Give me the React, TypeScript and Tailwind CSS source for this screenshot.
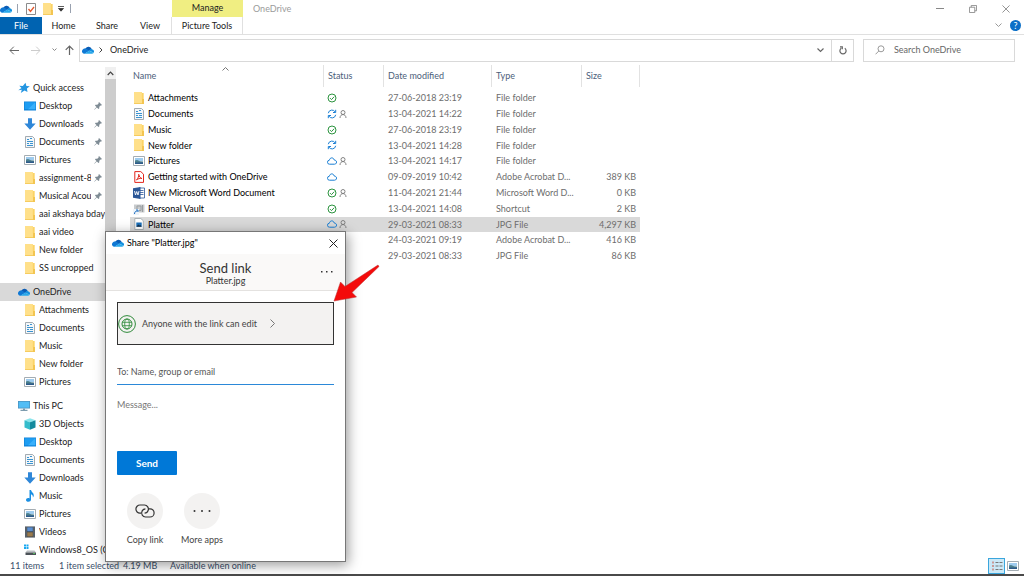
import type { ReactNode } from 'react';
import clsx from 'clsx';

function CloudLogo({ className = 'w-3 h-2' }: { className?: string }) {
  return (
    <svg className={clsx('shrink-0', className)} viewBox="0 0 24 16" preserveAspectRatio="none">
      <path d="M7 5a7 7 0 0 1 12.5 1.2L14 10 6 5.4z" fill="#0a5cb5" />
      <path d="M7.5 5.2 15 9.6 5 15.6H4A4.9 4.9 0 0 1 .8 8C1.800 5.500 5 4.200 7.500 5.200z" fill="#0f78d4" />
      <path d="M14.500 9.300c2-2.800 4-3.400 5.400-3a4.900 4.900 0 0 1 3.600 7.200z" fill="#1490df" />
      <path d="m14.500 9.300 9 4.200a4.600 4.600 0 0 1-3.800 2.100H4.300z" fill="#28a8ea" />
    </svg>
  );
}

function FolderIcon() {
  return (
    <svg className="w-3 h-3 shrink-0" viewBox="0 0 12 12">
      <path d="M1 0h8v1h1.500v11H1z" fill="#ffe08a" />
      <path d="M8.800 1h1.700v6.500H8.800z" fill="#fbd365" />
      <path d="M9 7h2v5H1v-.8h8z" fill="#f3c551" />
    </svg>
  );
}

function DocumentIcon() {
  return (
    <svg className="w-3 h-3 shrink-0" viewBox="0 0 12 12">
      <path d="M1.500.5h7l2 2v9h-9z" fill="#f4f7f9" stroke="#8d979e" strokeWidth=".8" />
      <path d="M3 3.500h2M6 2.500h2M3 5.500h6M3 7.500h2M6 7.500h3M3 9.500h6" stroke="#3a93d0" strokeWidth="1" />
    </svg>
  );
}

function PictureIcon() {
  return (
    <svg className="w-3 h-3 shrink-0" viewBox="0 0 12 12">
      <path d="M.5 1.500h11v9H.5z" fill="#fff" stroke="#a4adb3" strokeWidth="1" />
      <path d="M2 3h8v3H2z" fill="#9ecbee" />
      <path d="M2 5.500 4 5l3 1.200 3 .3V9H2z" fill="#4c7f8c" />
      <path d="M2 7.500h8V9H2z" fill="#2d5a8a" />
    </svg>
  );
}

function DesktopIcon() {
  return (
    <svg className="w-3 h-3 shrink-0" viewBox="0 0 12 12">
      <path d="M0 1.500h12v9H0z" fill="#1183d8" />
      <path d="M.7 2.200h10.600v7H.7z" fill="#1e9df2" />
      <path d="M11.300 2.200v7H4z" fill="#39b0fb" />
    </svg>
  );
}

function DownloadIcon() {
  return (
    <svg className="w-3 h-3 shrink-0" viewBox="0 0 12 12">
      <path d="M4 .3h4v5.200h3.700L6 11.800.3 5.500H4z" fill="#2f87d8" />
    </svg>
  );
}

function StarIcon() {
  return (
    <svg className="w-3 h-3 shrink-0" viewBox="0 0 12 12">
      <path d="m7.500.8.900 3.200 3.400.3-2.900 2.300.6 3.400-3-1.500L2.800 11l1-3.300-3.500.5L3.500 6 1.300 3.700l3.500.3z" fill="#2596e1" />
    </svg>
  );
}

function ComputerIcon() {
  return (
    <svg className="w-3 h-3 shrink-0" viewBox="0 0 12 12">
      <path d="M0 1h12v7.500H0z" fill="#4a90bd" />
      <path d="M.7 1.700h10.600v6H.7z" fill="#52bdf5" />
      <path d="M5 8.500h2v1.300h2.500v1.200h-7V9.800H5z" fill="#7d9cae" />
    </svg>
  );
}

function CubeIcon() {
  return (
    <svg className="w-3 h-3 shrink-0" viewBox="0 0 12 12">
      <path d="m6 .3 5.500 2L6 4.300l-5.500-2z" fill="#8be5ec" />
      <path d="M.5 2.300 6 4.300v7.500L.5 9.500z" fill="#35bccb" />
      <path d="M11.500 2.300 6 4.300v7.500l5.500-2.300z" fill="#148a9d" />
    </svg>
  );
}

function MusicIcon() {
  return (
    <svg className="w-3 h-3 shrink-0" viewBox="0 0 12 12">
      <path d="M5.500 0H7c.2 2 2.800 2.700 2.800 5.200 0 .9-.4 1.600-.9 2.200.2-1.800-.7-2.700-1.900-3.200v5.300c0 1.300-1.200 2.300-2.600 2.300S2 11 2 10s1-1.900 2.200-1.900c.5 0 .9.100 1.300.3z" fill="#1a8fe3" />
    </svg>
  );
}

function VideoIcon() {
  return (
    <svg className="w-3 h-3 shrink-0" viewBox="0 0 12 12">
      <path d="M1 .5h10v11H1z" fill="#39424c" />
      <path d="M3.200 1.300h5.600v4H3.200z" fill="#5b8fd1" />
      <path d="M3.200 6.300h5.600v4.200H3.200z" fill="#9a7a4c" />
      <path d="M2 1.500v9.500M10 1.500v9.500" stroke="#d6dadd" strokeWidth=".8" strokeDasharray="1 1" />
    </svg>
  );
}

function DriveIcon() {
  return (
    <svg className="w-3 h-3 shrink-0" viewBox="0 0 12 12">
      <path d="M0 .5h2v2H0zM2.500.5h2v2h-2zM0 3h2v2H0zM2.500 3h2v2h-2z" fill="#18a8f1" />
      <path d="M3 6.500h7.500L12 8.500H1.500z" fill="#b9bec2" />
      <path d="M1.500 8.500H12V11H1.500z" fill="#4c5258" />
      <path d="M9 9.300h2v.8H9z" fill="#58d95f" />
    </svg>
  );
}

function PdfIcon() {
  return (
    <svg className="w-3 h-3 shrink-0" viewBox="0 0 12 12">
      <path d="M1.800.6h6l2.700 2.600v8.200H1.800z" fill="#fff" stroke="#e2261d" />
      <path d="M3.500 9C5 7.500 6 5 5.700 3.300 6.200 5.800 7.500 7.200 9 7.500 7 7.200 5 7.600 3.500 9z" fill="none" stroke="#e2261d" />
    </svg>
  );
}

function WordIcon() {
  return (
    <svg className="w-3 h-3 shrink-0" viewBox="0 0 12 12">
      <path d="M6 1h5.500v10H6z" fill="#fff" stroke="#2b5797" strokeWidth=".8" />
      <path d="M7 3.500h3.500M7 5.500h3.500M7 7.500h3.500" stroke="#2b5797" strokeWidth=".8" />
      <path d="m0 1.300 7.500-1.200v11.800L0 10.700z" fill="#2b5797" />
      <path d="m1.500 4 1 4 1.200-3.500L5 8l1-4" fill="none" stroke="#fff" strokeWidth=".9" />
    </svg>
  );
}

function VaultIcon() {
  return (
    <svg className="w-3 h-3 shrink-0" viewBox="0 0 12 12">
      <path d="M1 1.500h10.500v8H1z" fill="#c8cbcd" />
      <path d="M4 3h4v4.500H4zM9.500 2v7" fill="none" stroke="#9a9ea1" />
      <path d="M0 6h6v6H0z" fill="#eef4fa" />
      <path d="M1.500 11c0-2 1-3 3-3M3 7h2v2" fill="none" stroke="#1f6fc0" />
    </svg>
  );
}

function JpgIcon() {
  return (
    <svg className="w-3 h-3 shrink-0" viewBox="0 0 12 12">
      <path d="M1.800.5h6l2.500 2.300v8.700H1.800z" fill="#fff" stroke="#9ba3a8" strokeWidth=".8" />
      <path d="M3.300 4.500h5.400v4.200H3.300z" fill="#1b6fb8" />
      <path d="m3.300 8.700 2-2.200 1.300 1 .8-.6 1.300 1.800z" fill="#17324d" />
    </svg>
  );
}

function PinIcon() {
  return (
    <svg className="w-2 h-2 shrink-0" viewBox="0 0 8 8">
      <path d="M5 0 8 3l-.8.500-.6-.1L5.300 4.700 5.200 6.500l-.7.500-1.600-1.600L.4 7.800l-.2-.2 2.300-2.500L1 3.500l.5-.7 1.800-.1L4.600 1.400 4.500.7z" fill="#7f8c95" />
    </svg>
  );
}

function CheckStatus() {
  return (
    <svg className="w-[10px] h-[10px]" viewBox="0 0 10 10" fill="none" stroke="#2d9440">
      <circle cx="5" cy="5" r="4" />
      <path d="m3 5.100 1.500 1.500L7.200 3.700" />
    </svg>
  );
}

function SyncStatus() {
  return (
    <svg className="w-[10px] h-[10px]" viewBox="0 0 10 10" fill="none" stroke="#1a7fd4">
      <path d="M1.300 4.200A3.700 3.700 0 0 1 8.200 3M8.700.8v2.700H6M8.700 5.800A3.700 3.700 0 0 1 1.800 7M1.300 9.200V6.500H4" />
    </svg>
  );
}

function CloudStatus() {
  return (
    <svg className="w-[10px] h-[10px]" viewBox="0 0 10 10" fill="none" stroke="#1a7fd4">
      <path d="M2.600 8.200a2 2 0 0 1-.2-4C2.800 1.300 6.500 1 7.200 4c3.200.1 3 4.200.3 4.200z" />
    </svg>
  );
}

function PersonIcon() {
  return (
    <svg className="w-2 h-2" viewBox="0 0 8 8" fill="none" stroke="#777" strokeWidth=".9">
      <circle cx="4" cy="2.500" r="2" />
      <path d="M1 8c0-4.600 6-4.600 6 0" />
    </svg>
  );
}

type TreeItem = { name: string; icon: ReactNode; pinned?: boolean };
type TreeGroup = TreeItem & { selected?: boolean; items: TreeItem[] };

const tree: TreeGroup[] = [
  {
    name: 'Quick access',
    icon: <StarIcon />,
    items: [
      { name: 'Desktop', icon: <DesktopIcon />, pinned: true },
      { name: 'Downloads', icon: <DownloadIcon />, pinned: true },
      { name: 'Documents', icon: <DocumentIcon />, pinned: true },
      { name: 'Pictures', icon: <PictureIcon />, pinned: true },
      { name: 'assignment-8', icon: <FolderIcon />, pinned: true },
      { name: 'Musical Acou', icon: <FolderIcon />, pinned: true },
      { name: 'aai akshaya bday', icon: <FolderIcon /> },
      { name: 'aai video', icon: <FolderIcon /> },
      { name: 'New folder', icon: <FolderIcon /> },
      { name: 'SS uncropped', icon: <FolderIcon /> },
    ],
  },
  {
    name: 'OneDrive',
    icon: <CloudLogo />,
    selected: true,
    items: [
      { name: 'Attachments', icon: <FolderIcon /> },
      { name: 'Documents', icon: <DocumentIcon /> },
      { name: 'Music', icon: <FolderIcon /> },
      { name: 'New folder', icon: <FolderIcon /> },
      { name: 'Pictures', icon: <PictureIcon /> },
    ],
  },
  {
    name: 'This PC',
    icon: <ComputerIcon />,
    items: [
      { name: '3D Objects', icon: <CubeIcon /> },
      { name: 'Desktop', icon: <DesktopIcon /> },
      { name: 'Documents', icon: <DocumentIcon /> },
      { name: 'Downloads', icon: <DownloadIcon /> },
      { name: 'Music', icon: <MusicIcon /> },
      { name: 'Pictures', icon: <PictureIcon /> },
      { name: 'Videos', icon: <VideoIcon /> },
      { name: 'Windows8_OS (C', icon: <DriveIcon /> },
    ],
  },
];

type FileRow = {
  name: string;
  icon: ReactNode;
  status: ReactNode;
  shared?: boolean;
  date: string;
  type: string;
  size?: string;
  selected?: boolean;
};

const files: FileRow[] = [
  { name: 'Attachments', icon: <FolderIcon />, status: <CheckStatus />, date: '27-06-2018 23:19', type: 'File folder' },
  { name: 'Documents', icon: <DocumentIcon />, status: <SyncStatus />, shared: true, date: '13-04-2021 14:22', type: 'File folder' },
  { name: 'Music', icon: <FolderIcon />, status: <CheckStatus />, date: '27-06-2018 23:19', type: 'File folder' },
  { name: 'New folder', icon: <FolderIcon />, status: <SyncStatus />, date: '13-04-2021 14:28', type: 'File folder' },
  { name: 'Pictures', icon: <PictureIcon />, status: <CloudStatus />, shared: true, date: '13-04-2021 14:17', type: 'File folder' },
  { name: 'Getting started with OneDrive', icon: <PdfIcon />, status: <CloudStatus />, date: '09-09-2019 10:42', type: 'Adobe Acrobat D...', size: '389 KB' },
  { name: 'New Microsoft Word Document', icon: <WordIcon />, status: <CheckStatus />, shared: true, date: '11-04-2021 21:44', type: 'Microsoft Word D...', size: '0 KB' },
  { name: 'Personal Vault', icon: <VaultIcon />, status: <CheckStatus />, date: '13-04-2021 14:08', type: 'Shortcut', size: '2 KB' },
  { name: 'Platter', icon: <JpgIcon />, status: <CloudStatus />, shared: true, date: '29-03-2021 08:33', type: 'JPG File', size: '4,297 KB', selected: true },
  { name: '', icon: null, status: null, date: '24-03-2021 09:19', type: 'Adobe Acrobat D...', size: '416 KB' },
  { name: '', icon: null, status: null, date: '29-03-2021 08:33', type: 'JPG File', size: '86 KB' },
];

const columns = [
  { name: 'Name', width: 'w-[194px]' },
  { name: 'Status', width: 'w-[60px]' },
  { name: 'Date modified', width: 'w-[108px]' },
  { name: 'Type', width: 'w-[90px]' },
  { name: 'Size', width: 'w-[58px]' },
];

function TitleBar() {
  return (
    <div className="flex h-[17px]">
      <div className="flex w-[172px] items-center">
        <CloudLogo className="w-3 h-2" />
        <span className="ml-[5px] h-[9px] w-px bg-gray-400" />
        <button aria-label="Properties" className="ml-2">
          <svg className="w-[10px] h-3" viewBox="0 0 10 12">
            <path d="M.5.500h9v11h-9z" fill="#fff" stroke="#8b8b8b" />
            <path d="m2.500 6 2 2.500L8 4" fill="none" stroke="#e3562a" strokeWidth="1.300" />
          </svg>
        </button>
        <button aria-label="New folder" className="ml-[6px]">
          <FolderIcon />
        </button>
        <button aria-label="Customize toolbar" className="ml-1">
          <svg className="w-[6px] h-[6px]" viewBox="0 0 6 6">
            <path d="M0 .5h6M.5 2.500h5L3 5.200z" stroke="#333" strokeWidth=".8" fill="#333" />
          </svg>
        </button>
        <span className="ml-[6px] h-[9px] w-px bg-gray-400" />
      </div>
      <div className="w-[71px] bg-[#f0ee82] text-center leading-[16px]">Manage</div>
      <h1 className="ml-[10px] leading-[18px] text-[#9b9b9b]">OneDrive</h1>
      <div className="ml-auto flex items-center gap-[25px] pr-[14px] text-[#888]">
        <button aria-label="Minimize" className="h-px w-2 bg-[#888]" />
        <button aria-label="Restore">
          <svg className="w-2 h-2" viewBox="0 0 9 9" fill="none" stroke="currentColor">
            <path d="M.5 2.500h6v6h-6zM2.500 2.500v-2h6v6h-2" />
          </svg>
        </button>
        <button aria-label="Close">
          <svg className="w-2 h-2" viewBox="0 0 9 9" stroke="currentColor">
            <path d="m.5.500 8 8m0-8-8 8" />
          </svg>
        </button>
      </div>
    </div>
  );
}

function RibbonTabs() {
  return (
    <div className="flex h-[18px] border-b border-[#e0e0e0] leading-[18px]">
      <button className="w-[42px] bg-[#0063b1] text-white">File</button>
      <button className="w-[43px]">Home</button>
      <button className="w-[44px]">Share</button>
      <button className="w-[42px]">View</button>
      <button className="w-[72px] border-x border-[#e0e0e0]">Picture Tools</button>
      <div className="ml-auto flex items-center gap-2 pr-[3px]">
        <button aria-label="Expand ribbon">
          <svg className="w-[7px] h-[5px]" viewBox="0 0 7 5" fill="none" stroke="#999">
            <path d="m.5.500 3 3 3-3" />
          </svg>
        </button>
        <button
          aria-label="Help"
          className="size-[11px] rounded-full bg-[#0b6fc7] text-center leading-[11px] text-white"
        >
          ?
        </button>
      </div>
    </div>
  );
}

function AddressRow() {
  return (
    <div className="flex h-[30px] items-center pl-[9px] pr-[9px]">
      <div className="flex w-[70px] items-center text-[#666]">
        <button aria-label="Back">
          <svg className="w-[10px] h-[9px]" viewBox="0 0 10 9" fill="none" stroke="currentColor">
            <path d="M10 4.500H1M4.800.700 1 4.500l3.800 3.800" />
          </svg>
        </button>
        <button aria-label="Forward" className="ml-3 text-[#ccc]">
          <svg className="w-[10px] h-[9px]" viewBox="0 0 10 9" fill="none" stroke="currentColor">
            <path d="M0 4.500h9M5.200.700 9 4.500 5.200 8.300" />
          </svg>
        </button>
        <button aria-label="Recent locations" className="ml-[11px]">
          <svg className="w-[5px] h-[4px]" viewBox="0 0 5 4" fill="none" stroke="#888">
            <path d="m.5.500 2 2 2-2" />
          </svg>
        </button>
        <button aria-label="Up" className="ml-2">
          <svg className="w-[9px] h-[10px]" viewBox="0 0 9 10" fill="none" stroke="currentColor" strokeWidth="1.200">
            <path d="M4.500 10V1M.7 4.800 4.500 1l3.800 3.800" />
          </svg>
        </button>
      </div>
      <div className="flex h-[23px] flex-1 items-center border border-[#d9d9d9] pl-[2px]">
        <CloudLogo className="w-3 h-2" />
        <svg className="ml-[5px] w-[4px] h-[6px]" viewBox="0 0 4 6" fill="none" stroke="#444">
          <path d="m.5.500 2.500 2.500L.500 5.500" />
        </svg>
        <span className="ml-[7px]">OneDrive</span>
        <button aria-label="Previous locations" className="ml-auto flex h-full w-[21px] items-center justify-center">
          <svg className="w-[7px] h-[5px]" viewBox="0 0 7 5" fill="none" stroke="#666" strokeWidth="1.200">
            <path d="m.5.500 3 3 3-3" />
          </svg>
        </button>
        <button aria-label="Refresh" className="flex h-full w-[22px] items-center justify-center border-l border-[#d9d9d9]">
          <svg className="w-2 h-[9px]" viewBox="0 0 8 9" fill="none" stroke="#666" strokeWidth="1.200">
            <path d="M5.800 2.300A3.100 3.100 0 1 1 2.200 2.300M1 .800h2.300v2.500" />
          </svg>
        </button>
      </div>
      <div className="ml-[9px] flex h-[23px] w-[152px] items-center border border-[#d9d9d9] pl-[11px]">
        <svg className="w-[10px] h-[10px]" viewBox="0 0 10 10" fill="none" stroke="#999">
          <circle cx="6" cy="3.800" r="3" />
          <path d="M3.800 6 .5 9.300" />
        </svg>
        <input
          aria-label="Search OneDrive"
          placeholder="Search OneDrive"
          className="ml-[9px] min-w-0 flex-1 outline-none placeholder:text-[#666]"
        />
      </div>
    </div>
  );
}

function Sidebar() {
  return (
    <div className="flex w-[116px] shrink-0">
      <nav className="min-w-0 flex-1 overflow-hidden pt-[14px]">
        {tree.map((group) => (
          <div key={group.name} className="mb-[6px]">
            <button
              className={clsx(
                'flex h-[18px] w-full items-center gap-[3px] pl-[18px] whitespace-nowrap',
                group.selected && 'bg-[#d9d9d9]',
              )}
            >
              {group.icon}
              {group.name}
            </button>
            {group.items.map((item) => (
              <button key={item.name} className="flex h-[18px] w-full items-center gap-[3px] pl-6 whitespace-nowrap">
                {item.icon}
                <span className="min-w-0 flex-1 overflow-hidden text-left">{item.name}</span>
                {item.pinned && (
                  <span className="pr-[3px]">
                    <PinIcon />
                  </span>
                )}
              </button>
            ))}
          </div>
        ))}
      </nav>
      <div className="flex w-[11px] flex-col pt-[2px]">
        <button aria-label="Scroll up" className="flex h-3 items-center justify-center bg-[#f0f0f0]">
          <svg className="w-[7px] h-[5px]" viewBox="0 0 7 5" fill="none" stroke="#444" strokeWidth="1.200">
            <path d="m.7 4 2.800-2.800L6.300 4" />
          </svg>
        </button>
        <div className="h-[220px] bg-[#cdcdcd]" />
        <div className="flex-1 bg-[#f0f0f0]" />
      </div>
    </div>
  );
}

function FileTable() {
  return (
    <main className="flex-1 pl-[14px]">
      <table className="h-[199px] w-[510px] table-fixed border-collapse text-left whitespace-nowrap">
        <thead>
          <tr>
            {columns.map((col, i) => (
              <th key={col.name} className={clsx('h-[25px] p-0 align-top font-normal', col.width)}>
                <button
                  className={clsx(
                    'relative flex h-[22px] w-full items-center border-r border-[#e2e2e2] text-[#4c607a]',
                    i === 0 ? 'pl-[3px]' : 'pl-1',
                  )}
                >
                  {col.name}
                  {i === 0 && (
                    <svg className="absolute top-[2px] left-[92px] w-[7px] h-[4px]" viewBox="0 0 7 4" fill="none" stroke="#777">
                      <path d="m.5 3.500 3-3 3 3" />
                    </svg>
                  )}
                </button>
              </th>
            ))}
          </tr>
        </thead>
        <tbody className="text-[#6d6d6d]">
          {files.map((file, i) => (
            <tr key={i} className={clsx(file.selected && 'bg-[#d9d9d9]')}>
              <td className="p-0 pl-[3px]">
                <div className="flex items-center gap-[3px] text-black">
                  {file.icon}
                  {file.name}
                </div>
              </td>
              <td className="p-0 pl-[3px]">
                <div className="flex items-center gap-[2px]">
                  {file.status}
                  {file.shared && <PersonIcon />}
                </div>
              </td>
              <td className="p-0 pl-1">{file.date}</td>
              <td className="p-0 pl-1">{file.type}</td>
              <td className="p-0 pr-1 text-right">{file.size}</td>
            </tr>
          ))}
        </tbody>
      </table>
    </main>
  );
}

function ShareDialog() {
  return (
    <div
      role="dialog"
      aria-label="Share Platter.jpg"
      className="absolute top-[231px] left-[105px] w-[241px] border border-[#777] bg-white pb-[15px] shadow-[2px_3px_12px_rgba(0,0,0,0.4)]"
    >
      <div className="flex h-[22px] items-center pl-[6px] pr-[7px]">
        <CloudLogo className="w-3 h-2" />
        <span className="ml-[3px] text-black">Share "Platter.jpg"</span>
        <button aria-label="Close dialog" className="ml-auto">
          <svg className="w-[9px] h-[9px]" viewBox="0 0 9 9" stroke="#222">
            <path d="m.5.500 8 8m0-8-8 8" />
          </svg>
        </button>
      </div>
      <div className="relative h-[37px] border-b border-[#e4e2e0] bg-[#faf9f8] pt-[6px] text-center text-[#333]">
        <h2 className="text-[13px] leading-[16px]">Send link</h2>
        <p className="leading-[10px]">Platter.jpg</p>
        <button aria-label="More options" className="absolute top-4 right-3">
          <svg className="w-3 h-[3px]" viewBox="0 0 12 3" fill="#333">
            <path d="M0 1h1.500v1.500H0zM5 1h1.500v1.500H5zM10 1h1.500v1.500H10z" />
          </svg>
        </button>
      </div>
      <div className="px-[11px] text-[#444]">
        <button className="mt-[11px] flex h-[43px] w-full items-center border border-[#333] bg-[#f3f2f1]">
          <svg className="w-[18px] h-[18px]" viewBox="0 0 18 18" fill="none" stroke="#2f8a3a">
            <circle cx="9" cy="9" r="8.400" />
            <circle cx="9" cy="9" r="5" />
            <path d="M4.300 7.300h9.400M4.300 10.700h9.400" strokeWidth=".8" />
            <ellipse cx="9" cy="9" rx="2.300" ry="5" strokeWidth=".8" />
          </svg>
          <span className="ml-[6px]">Anyone with the link can edit</span>
          <svg className="ml-[13px] w-[5px] h-[9px]" viewBox="0 0 5 9" fill="none" stroke="#777">
            <path d="m.5.500 4 4-4 4" />
          </svg>
        </button>
        <div className="mt-[14px] border-b border-[#2b88d8]">
          <input
            aria-label="To: Name, group or email"
            placeholder="To: Name, group or email"
            className="block h-[25px] w-full outline-none placeholder:text-[#555]"
          />
        </div>
        <textarea
          aria-label="Message"
          placeholder="Message..."
          className="mt-[13px] block h-[53px] w-full resize-none leading-[14px] outline-none placeholder:text-[#777]"
        />
        <button className="block h-6 w-[60px] rounded-[1px] bg-[#0078d7] text-[10px] font-bold text-white">Send</button>
        <div className="mt-[18px] flex">
          <button className="flex w-[56px] flex-col items-center">
            <span className="flex size-9 items-center justify-center rounded-full bg-[#f3f2f1]">
              <svg className="w-5 h-[14px]" viewBox="0 0 20 14" fill="none" stroke="#333" strokeWidth="1.200">
                <path d="M6 9.200H5A4.100 4.100 0 0 1 5 1h4.500a4 4 0 0 1 3.600 5.500c-.5 1.500-2 2.600-3.500 2.700" />
                <path d="M14 4.800h1a4.100 4.100 0 0 1 0 8.200h-4.500a4 4 0 0 1-3.600-5.500c.5-1.500 2-2.600 3.500-2.700" />
              </svg>
            </span>
            <span className="mt-[5px] leading-[12px]">Copy link</span>
          </button>
          <button className="flex w-[58px] flex-col items-center">
            <span className="flex size-9 items-center justify-center rounded-full bg-[#f3f2f1]">
              <svg className="w-[18px] h-[2px]" viewBox="0 0 18 2" fill="#333">
                <circle cx="1.500" cy="1" r="1" />
                <circle cx="9" cy="1" r="1" />
                <circle cx="16.500" cy="1" r="1" />
              </svg>
            </span>
            <span className="mt-[5px] leading-[12px]">More apps</span>
          </button>
        </div>
      </div>
    </div>
  );
}

function StatusBar() {
  return (
    <footer className="flex h-[18px] items-center border-b-2 border-[#4a4a4a] pl-[10px] text-[#3b4f6b]">
      <span className="w-[49px]">11 items</span>
      <span className="w-[64px]">1 item selected</span>
      <span className="w-[47px]">4.19 MB</span>
      <span>Available when online</span>
      <div className="ml-auto flex h-full items-center gap-[2px] pr-[5px]">
        <button aria-label="Details view" className="flex h-full w-[17px] items-center justify-center border border-[#3aa6dd] bg-[#cbe8f6]">
          <svg className="w-3 h-3" viewBox="0 0 12 12" stroke="#777">
            <path d="M1 2.500h2M1 6h2M1 9.500h2" stroke="#c99a97" strokeWidth="2" />
            <path d="M4.500 2.500h3M8.500 2.500h3M4.500 6h3M8.500 6h3M4.500 9.500h3M8.500 9.500h3" />
          </svg>
        </button>
        <button aria-label="Thumbnail view">
          <PictureIcon />
        </button>
      </div>
    </footer>
  );
}

export default function App() {
  return (
    <div className="relative flex h-screen flex-col overflow-hidden bg-white font-['Lato','Open_Sans',sans-serif] text-[9px] text-[#222]">
      <TitleBar />
      <RibbonTabs />
      <AddressRow />
      <div className="flex min-h-0 flex-1">
        <Sidebar />
        <FileTable />
      </div>
      <StatusBar />
      <ShareDialog />
      <svg className="absolute top-[262px] left-[332px] w-[50px] h-[42px]" viewBox="332 262 50 42">
        <path d="m334 301 6.500-19 4.500 4.500L378 265l1 1.500-27 26 4.500 4.500z" fill="#f40b0b" stroke="#b33" strokeWidth=".5" />
      </svg>
    </div>
  );
}
